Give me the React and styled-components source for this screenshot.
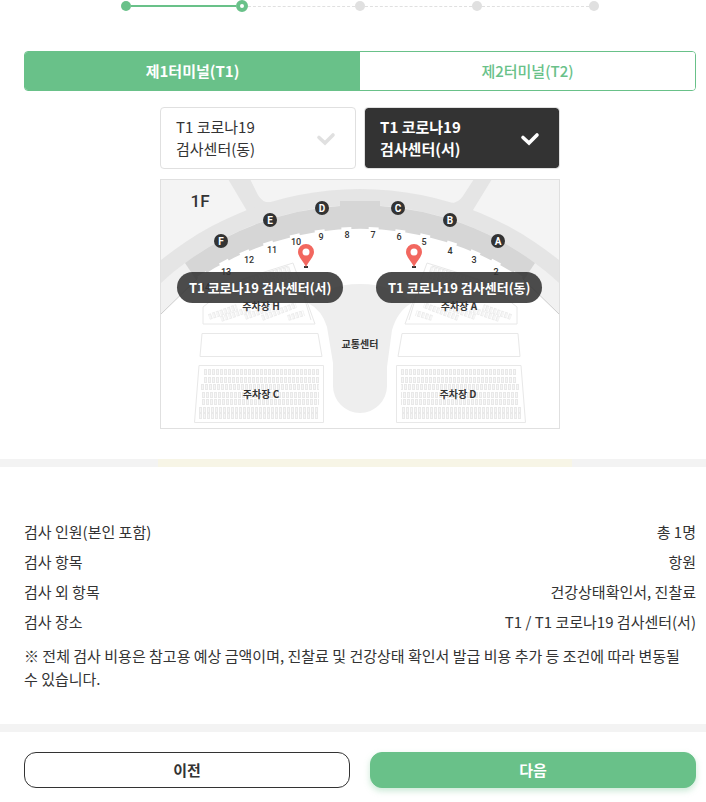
import React, { useState } from "react";
import styled, { createGlobalStyle, css } from "styled-components";

const GREEN = "#69c189";
const INK = "#333";
const LINE = "#e0e0e0";

const GlobalStyle = createGlobalStyle`
  *, *::before, *::after { box-sizing: border-box; }
  body {
    margin: 0;
    background: #fff;
    color: ${INK};
    font-family: "Noto Sans CJK KR", "Noto Sans", sans-serif;
    font-size: 15px;
    line-height: 22px;
  }
  button { font: inherit; color: inherit; cursor: pointer; }
`;

const Section = styled.section`
  padding: 0 10px 0 24px;
`;

const Steps = styled.ol`
  display: flex;
  align-items: center;
  max-width: 478px;
  height: 12px;
  margin: 0 auto 39px;
  padding: 0;
  list-style: none;
`;

const Step = styled.li`
  display: flex;
  align-items: center;
  flex: ${(p) => (p.$first ? "none" : "1")};

  &::before {
    content: "";
    display: ${(p) => (p.$first ? "none" : "block")};
    flex: 1;
    border-top: ${(p) => (p.$reached ? `2px solid ${GREEN}` : `1px dashed ${LINE}`)};
  }
`;

const Dot = styled.span`
  width: 10px;
  height: 10px;
  border-radius: 50%;
  background: ${(p) => (p.$reached ? GREEN : LINE)};
  ${(p) =>
    p.$current &&
    css`
      width: 12px;
      height: 12px;
      border: 4px solid ${GREEN};
      background: #fff;
    `}
`;

const Tabs = styled.div`
  display: grid;
  grid-template-columns: 1fr 1fr;
  height: 40px;
  border: 1px solid ${GREEN};
  border-radius: 4px;
  overflow: hidden;
`;

const Tab = styled.button`
  border: 0;
  padding: 0;
  background: ${(p) => (p.$active ? GREEN : "#fff")};
  color: ${(p) => (p.$active ? "#fff" : GREEN)};
  font-weight: ${(p) => (p.$active ? 700 : 500)};
`;

const Picker = styled.div`
  max-width: 400px;
  margin: 16px auto 30px;
`;

const Centers = styled.div`
  display: grid;
  grid-template-columns: 1fr 1fr;
  gap: 8px;
  margin-bottom: 10px;
`;

const CenterCard = styled.button`
  display: flex;
  align-items: center;
  justify-content: space-between;
  padding: 8px 19px 8px 15px;
  border: 1px solid ${LINE};
  border-radius: 4px;
  background: ${(p) => (p.$active ? INK : "#fff")};
  background-clip: padding-box;
  color: ${(p) => (p.$active ? "#fff" : INK)};
  font-weight: ${(p) => (p.$active ? 700 : 400)};
  text-align: left;

  svg {
    flex: none;
    color: ${(p) => (p.$active ? "#fff" : LINE)};
  }
`;

const MapFrame = styled.div`
  position: relative;
  border: 1px solid ${LINE};
`;

const MapDrawing = styled.svg`
  display: block;
  width: 100%;
  height: auto;
`;

const MapLabel = styled.button`
  position: absolute;
  top: 37%;
  left: ${(p) => p.$left};
  height: 31px;
  padding: 0 12px;
  border: 0;
  border-radius: 16px;
  background: rgba(51, 51, 51, 0.88);
  color: #fff;
  font-size: 13px;
  font-weight: 700;
  line-height: 31px;
  white-space: nowrap;
`;

const Divider = styled.div`
  height: 8px;
  padding-left: 24px;
  background: #f3f3f3;
`;

const DividerAccent = styled.div`
  max-width: 414px;
  height: 100%;
  margin: 0 auto;
  background: #f7f5e6;
`;

const Summary = styled.dl`
  margin: 0;
  padding-top: 50px;
`;

const SummaryRow = styled.div`
  display: flex;
  justify-content: space-between;
  line-height: 30px;

  dd { margin: 0; }
`;

const Note = styled.p`
  margin: 7px 0 34px;
  line-height: 23px;
`;

const Actions = styled.div`
  display: grid;
  grid-template-columns: 1fr 1fr;
  gap: 20px;
  padding: 20px 0 14px;
`;

const Action = styled.button`
  height: 36px;
  padding: 0;
  border: 1px solid ${(p) => (p.$primary ? GREEN : INK)};
  border-radius: 12px;
  background: ${(p) => (p.$primary ? GREEN : "#fff")};
  color: ${(p) => (p.$primary ? "#fff" : INK)};
  font-weight: 700;
  box-shadow: ${(p) => (p.$primary ? "0 3px 6px rgba(105, 193, 137, 0.35)" : "none")};
`;

function CheckIcon() {
  return (
    <svg width="20" height="16" viewBox="0 0 20 16" fill="none" aria-hidden="true">
      <path d="M3 7.5 9 13 17 5" stroke="currentColor" strokeWidth="3.6" strokeLinecap="round" strokeLinejoin="miter" />
    </svg>
  );
}

const gates = [
  ["F", 221, 241], ["E", 270, 220], ["D", 322, 208],
  ["C", 398, 208], ["B", 450, 220], ["A", 498, 241],
];

const exits = [
  ["14", 205, 290], ["13", 226, 275], ["12", 249, 263], ["11", 272, 253], ["10", 296, 245],
  ["9", 321, 240], ["8", 347, 238], ["7", 373, 238], ["6", 399, 240],
  ["5", 424, 245], ["4", 450, 254], ["3", 474, 263], ["2", 496, 275],
];

const notchAngles = [-33, -28, -23.5, -18.5, -13, -8, -2.7, 2.7, 8, 13, 18.5, 23.5, 28, 33];

const slotRows = [
  [204, 372, 319], [204, 380, 319], [201, 387, 319], [202, 395, 319],
  [202, 402, 319], [199, 410, 319], [199, 416, 319],
];

const slantedRows = [
  [209, 317, 237, 307], [221, 319, 250, 309], [245, 317, 275, 306],
  [262, 318, 296, 305], [288, 318, 304, 313], [230, 288, 290, 269], [234, 293, 292, 275],
];

function ParkingSide() {
  return (
    <g fill="#fff" stroke="#e8e8e8">
      <path d="M203 324V307L222 292 242 279 293 263 315 324Z" />
      <path d="M302 290 311 320M229 284 288 266" />
      <path d="M202 333.500H318L322 356.500H200Z" />
      <path d="M199 365.500H323.500V422.500H194.500Z" />
      {slantedRows.map(([x1, y1, x2, y2]) => (
        <g key={`${x1}-${y1}`} stroke="#ececec">
          <path d={`M${x1} ${y1}L${x2} ${y2}`} strokeWidth="6" strokeDasharray="3 1" />
          <path d={`M${x1} ${y1}L${x2} ${y2}`} stroke="#f6f6f6" strokeWidth="4" strokeDasharray="2 2" />
        </g>
      ))}
      {slotRows.map(([x1, y, x2]) => (
        <g key={y} stroke="#e9e9e9">
          <path d={`M${x1} ${y}H${x2}`} strokeWidth="6" strokeDasharray="3 1" />
          <path d={`M${x1 + 1} ${y}H${x2}`} stroke="#f5f5f5" strokeWidth="4" strokeDasharray="1 3" />
        </g>
      ))}
    </g>
  );
}

function Pin({ x }) {
  return (
    <g transform={`translate(${x} 244)`}>
      <path d="M-2 22H2V24H-2Z" fill={INK} />
      <path d="M0 23C-2 18-8 13-8 8A8 8 0 0 1 8 8C8 13 2 18 0 23Z" fill="#f2675f" />
      <circle cy="8" r="3.500" fill="#fff" />
    </g>
  );
}

function TerminalMap() {
  return (
    <MapDrawing viewBox="161 180 398 248" role="img" aria-label="제1터미널 1F">
      <rect x="160" y="179" width="400" height="250" fill="#f4f4f4" />
      <path d="M228 179H250L258 195Q263 204 273 202L280 225 240 225 247 211Z" fill="#e5e5e5" />
      <path d="M492 179H474L463 196Q458 204 448 203L440 225H480L473 210Z" fill="#e5e5e5" />
      <circle cx="360" cy="503" r="314" fill="#e5e5e5" />
      <circle cx="360" cy="498" r="293" fill="#f1f1f1" />
      <path d="M185 263A293 293 0 0 1 340 206V201H380V206A293 293 0 0 1 535 263L523 281H197Z" fill="#d6d6d6" />
      <path d="M160 315 197 279A290 290 0 0 1 523 279L560 315V430H160Z" fill="#fff" />
      {notchAngles.map((a) => (
        <rect key={a} x="355" y="227" width="10" height="4" fill="#fff" transform={`rotate(${a} 360 518)`} />
      ))}
      <path d="M160 315 197 279M560 315 523 279" stroke="#ccc" strokeWidth="1" />
      <path
        d="M308 303Q325 284 360 284T412 303Q398 310 392 330L387 367V386A27 27 0 0 1 333 386V363L327 327Q322 310 308 303Z"
        fill="#eee"
      />
      <ParkingSide />
      <g transform="translate(720 0) scale(-1 1)">
        <ParkingSide />
      </g>
      <g fill={INK} fontFamily="Roboto, sans-serif" fontWeight="500" textAnchor="middle">
        <text x="200" y="207" fontSize="17">1F</text>
        {exits.map(([n, x, y]) => (
          <text key={n} x={x} y={y} fontSize="9">{n}</text>
        ))}
      </g>
      {gates.map(([n, x, y]) => (
        <g key={n}>
          <circle cx={x} cy={y} r="7" fill={INK} />
          <text x={x} y={y + 4} fill="#fff" fontFamily="Roboto, sans-serif" fontSize="10" fontWeight="700" textAnchor="middle">{n}</text>
        </g>
      ))}
      <g fill={INK} fontSize="10" fontWeight="700" textAnchor="middle">
        <text x="261" y="310">주차장 H</text>
        <text x="459" y="310">주차장 A</text>
        <text x="360" y="348">교통센터</text>
        <text x="261" y="398">주차장 C</text>
        <text x="458" y="398">주차장 D</text>
      </g>
      <Pin x={306} />
      <Pin x={414} />
    </MapDrawing>
  );
}

const steps = [0, 1, 2, 3, 4];
const currentStep = 1;
const terminals = ["제1터미널(T1)", "제2터미널(T2)"];
const centers = ["동", "서"];

export default function App() {
  const [terminal, setTerminal] = useState(0);
  const [center, setCenter] = useState("서");

  const summary = [
    ["검사 인원(본인 포함)", "총 1명"],
    ["검사 항목", "항원"],
    ["검사 외 항목", "건강상태확인서, 진찰료"],
    ["검사 장소", `T1 / T1 코로나19 검사센터(${center})`],
  ];

  return (
    <main>
      <GlobalStyle />
      <Section>
        <Steps>
          {steps.map((s) => (
            <Step key={s} $first={s === 0} $reached={s <= currentStep} aria-current={s === currentStep ? "step" : undefined}>
              <Dot $reached={s <= currentStep} $current={s === currentStep} />
            </Step>
          ))}
        </Steps>
        <Tabs role="tablist">
          {terminals.map((name, i) => (
            <Tab key={name} type="button" role="tab" aria-selected={terminal === i} $active={terminal === i} onClick={() => setTerminal(i)}>
              {name}
            </Tab>
          ))}
        </Tabs>
        <Picker>
          <Centers>
            {centers.map((c) => (
              <CenterCard key={c} type="button" aria-pressed={center === c} $active={center === c} onClick={() => setCenter(c)}>
                <span>T1 코로나19<br />검사센터({c})</span>
                <CheckIcon />
              </CenterCard>
            ))}
          </Centers>
          <MapFrame>
            <TerminalMap />
            <MapLabel type="button" $left="4%" onClick={() => setCenter("서")}>T1 코로나19 검사센터(서)</MapLabel>
            <MapLabel type="button" $left="54%" onClick={() => setCenter("동")}>T1 코로나19 검사센터(동)</MapLabel>
          </MapFrame>
        </Picker>
      </Section>
      <Divider>
        <DividerAccent />
      </Divider>
      <Section>
        <Summary>
          {summary.map(([label, value]) => (
            <SummaryRow key={label}>
              <dt>{label}</dt>
              <dd>{value}</dd>
            </SummaryRow>
          ))}
        </Summary>
        <Note>
          ※ 전체 검사 비용은 참고용 예상 금액이며, 진찰료 및 건강상태 확인서 발급 비용 추가 등 조건에 따라 변동될 수 있습니다.
        </Note>
      </Section>
      <Divider />
      <Section>
        <Actions>
          <Action type="button">이전</Action>
          <Action type="button" $primary>다음</Action>
        </Actions>
      </Section>
    </main>
  );
}
